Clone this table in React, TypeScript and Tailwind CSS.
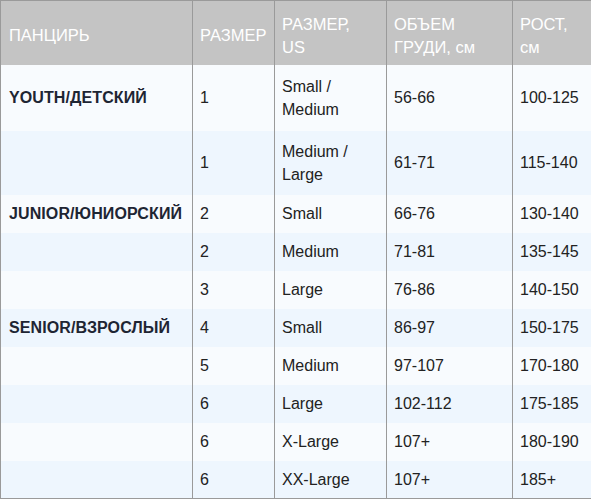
const rows: { name: string; size: string; us: string; chest: string; height: string; h: string }[] = [
  { name: 'YOUTH/ДЕТСКИЙ', size: '1', us: 'Small / Medium', chest: '56-66', height: '100-125', h: 'h-[66px]' },
  { name: '', size: '1', us: 'Medium / Large', chest: '61-71', height: '115-140', h: 'h-[64px]' },
  { name: 'JUNIOR/ЮНИОРСКИЙ', size: '2', us: 'Small', chest: '66-76', height: '130-140', h: 'h-[38px]' },
  { name: '', size: '2', us: 'Medium', chest: '71-81', height: '135-145', h: 'h-[38px]' },
  { name: '', size: '3', us: 'Large', chest: '76-86', height: '140-150', h: 'h-[38px]' },
  { name: 'SENIOR/ВЗРОСЛЫЙ', size: '4', us: 'Small', chest: '86-97', height: '150-175', h: 'h-[38px]' },
  { name: '', size: '5', us: 'Medium', chest: '97-107', height: '170-180', h: 'h-[38px]' },
  { name: '', size: '6', us: 'Large', chest: '102-112', height: '175-185', h: 'h-[38px]' },
  { name: '', size: '6', us: 'X-Large', chest: '107+', height: '180-190', h: 'h-[38px]' },
  { name: '', size: '6', us: 'XX-Large', chest: '107+', height: '185+', h: 'h-[38px]' },
]

export default function App() {
  return (
    <div className="w-[591px] bg-white" style={{ fontFamily: '"Liberation Sans", Arial, sans-serif' }}>
      <table className="w-[591px] table-fixed border-collapse border border-[#9a9a9a] text-[16px] leading-[23px]">
        <colgroup>
          <col className="w-[192px]" />
          <col className="w-[82px]" />
          <col className="w-[112px]" />
          <col className="w-[126px]" />
          <col className="w-[79px]" />
        </colgroup>
        <thead>
          <tr className="h-[64px] bg-[#c4c4c4] text-[16.5px] text-white">
            <th className="px-2 pt-[6px] text-left font-normal">ПАНЦИРЬ</th>
            <th className="border-l border-[#9a9a9a] px-[7px] pt-[6px] text-left font-normal">РАЗМЕР</th>
            <th className="border-l border-[#9a9a9a] px-[7px] pt-[6px] text-left font-normal">
              РАЗМЕР,
              <br />
              US
            </th>
            <th className="border-l border-[#9a9a9a] px-[7px] pt-[6px] text-left font-normal">ОБЪЕМ ГРУДИ, см</th>
            <th className="border-l border-[#9a9a9a] px-[7px] pt-[6px] text-left font-normal">РОСТ, см</th>
          </tr>
        </thead>
        <tbody className="text-[#222]">
          {rows.map((r, i) => (
            <tr key={i} className={`${r.h} ${i % 2 === 0 ? 'bg-[#f8fbfe]' : 'bg-[#eef6fe]'}`}>
              <td className="whitespace-nowrap px-2 text-[16px] font-bold tracking-[0.1px] text-[#1e2533]">{r.name}</td>
              <td className="border-l border-[#9a9a9a] px-[7px]">{r.size}</td>
              <td className="border-l border-[#9a9a9a] px-[7px]">{r.us}</td>
              <td className="border-l border-[#9a9a9a] px-[7px]">{r.chest}</td>
              <td className="border-l border-[#9a9a9a] px-[7px]">{r.height}</td>
            </tr>
          ))}
        </tbody>
      </table>
    </div>
  )
}
